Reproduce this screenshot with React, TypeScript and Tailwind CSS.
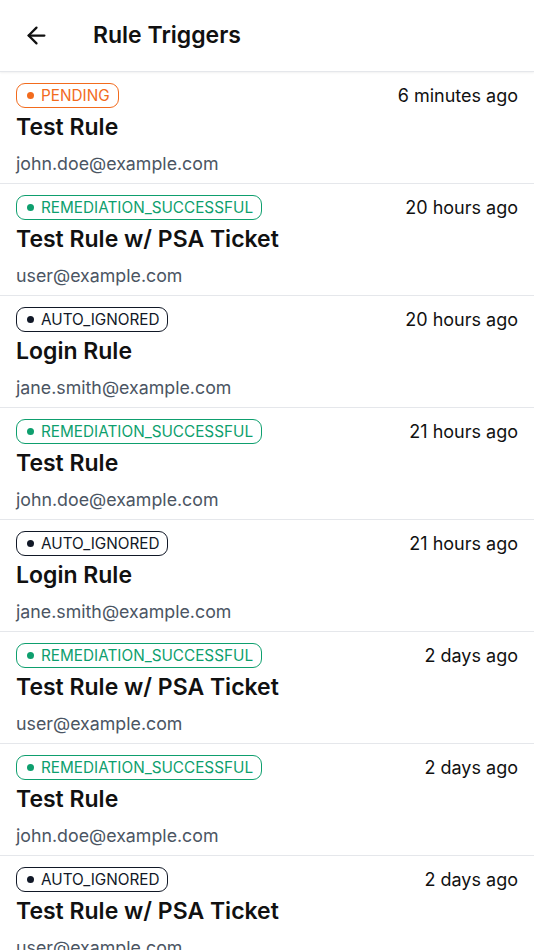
import { ArrowLeft } from "lucide-react";

type Status = "PENDING" | "REMEDIATION_SUCCESSFUL" | "AUTO_IGNORED";

const items: { status: Status; time: string; title: string; email: string }[] = [
  { status: "PENDING", time: "6 minutes ago", title: "Test Rule", email: "john.doe@example.com" },
  { status: "REMEDIATION_SUCCESSFUL", time: "20 hours ago", title: "Test Rule w/ PSA Ticket", email: "user@example.com" },
  { status: "AUTO_IGNORED", time: "20 hours ago", title: "Login Rule", email: "jane.smith@example.com" },
  { status: "REMEDIATION_SUCCESSFUL", time: "21 hours ago", title: "Test Rule", email: "john.doe@example.com" },
  { status: "AUTO_IGNORED", time: "21 hours ago", title: "Login Rule", email: "jane.smith@example.com" },
  { status: "REMEDIATION_SUCCESSFUL", time: "2 days ago", title: "Test Rule w/ PSA Ticket", email: "user@example.com" },
  { status: "REMEDIATION_SUCCESSFUL", time: "2 days ago", title: "Test Rule", email: "john.doe@example.com" },
  { status: "AUTO_IGNORED", time: "2 days ago", title: "Test Rule w/ PSA Ticket", email: "user@example.com" },
];

const badgeStyles: Record<Status, { box: string; dot: string }> = {
  PENDING: { box: "border-[#f26b1d] text-[#f26b1d]", dot: "bg-[#f26b1d]" },
  REMEDIATION_SUCCESSFUL: { box: "border-[#0e9f6e] text-[#0e9f6e]", dot: "bg-[#0e9f6e]" },
  AUTO_IGNORED: { box: "border-[#111827] text-[#111827]", dot: "bg-[#111827]" },
};

function StatusBadge({ status }: { status: Status }) {
  const s = badgeStyles[status];
  return (
    <span
      className={`inline-flex h-[25px] items-center gap-[7px] rounded-[9px] border-[1.5px] pl-[10px] pr-[8px] text-[15.3px] leading-none ${s.box}`}
    >
      <span className={`h-[7px] w-[7px] rounded-full ${s.dot}`} />
      {status}
    </span>
  );
}

export default function App() {
  return (
    <div className="min-h-[950px] bg-white font-['Inter',sans-serif] text-[#111]">
      <header className="flex h-[72px] items-center border-b border-[#e5e7eb] shadow-[0_1px_2px_rgba(0,0,0,0.06)]">
        <button type="button" className="ml-[23px] text-[#111]">
          <ArrowLeft size={27} strokeWidth={2} />
        </button>
        <h1 className="ml-[43px] text-[23px] font-semibold leading-none">Rule Triggers</h1>
      </header>

      <ul>
        {items.map((it, i) => (
          <li key={i} className="border-b border-[#e5e7eb] px-4 pt-2.5 pb-1">
            <div className="flex items-center justify-between">
              <StatusBadge status={it.status} />
              <span className="text-[18px] text-[#111]">{it.time}</span>
            </div>
            <div className="mt-[3px] text-[23px] font-semibold leading-[30px]">{it.title}</div>
            <div className="mt-[7px] text-[17.8px] leading-[30px] text-[#4b5563]">{it.email}</div>
          </li>
        ))}
      </ul>
    </div>
  );
}
